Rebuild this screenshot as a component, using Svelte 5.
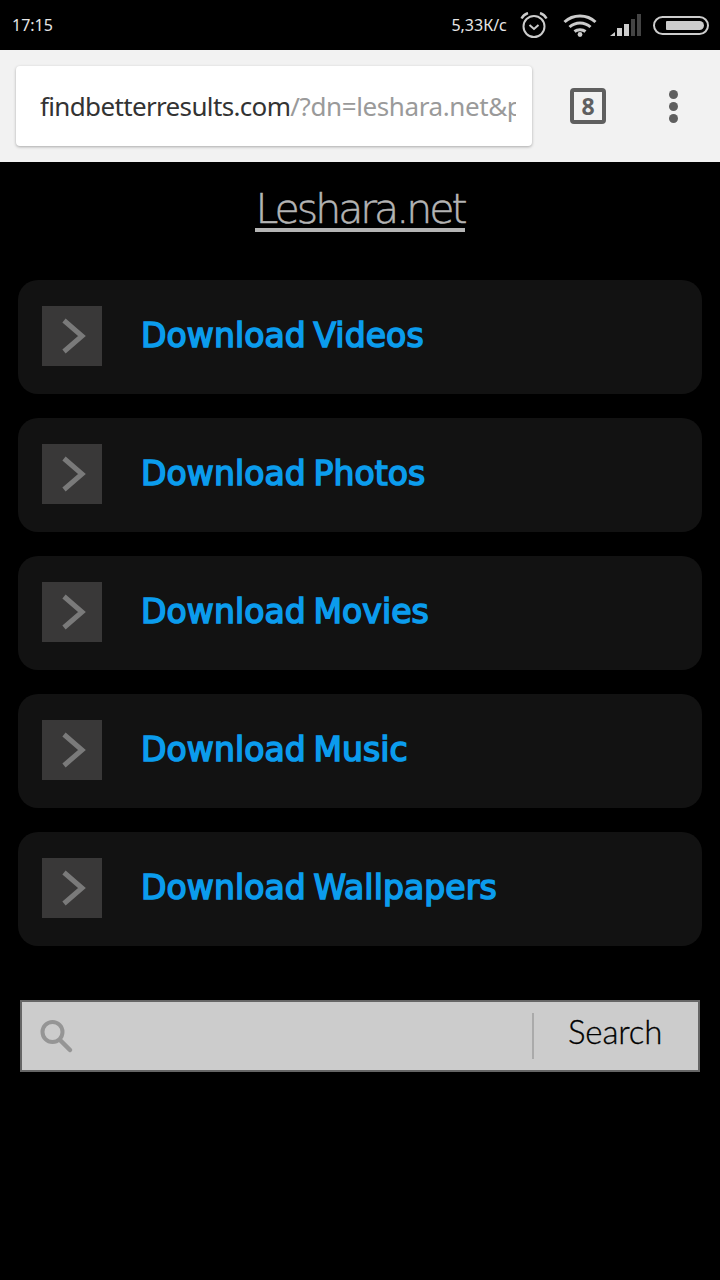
<script>
  const links = ['Download Videos', 'Download Photos', 'Download Movies', 'Download Music', 'Download Wallpapers'];
</script>

<div class="status">
  <span class="time">17:15</span>
  <div class="status-right">
    <span class="speed">5,33К/с</span>
    <svg class="alarm" width="28" height="26" viewBox="0 0 28 26" fill="none" stroke="#ccc">
      <circle cx="14" cy="14.5" r="10.5" stroke-width="2" />
      <path d="M9.5 13l4.5 4 4.5-4" stroke-width="2" />
      <path d="M1.5 6.5C3 3.5 5 2 8 1M26.5 6.5C25 3.5 23 2 20 1" stroke-width="2.4" />
    </svg>
    <svg class="wifi" width="34" height="24" viewBox="0 0 34 24" fill="none" stroke="#ccc" stroke-width="3">
      <path d="M1.5 9C10 1 24 1 32.5 9" />
      <path d="M6.5 14C12.5 8.5 21.5 8.5 27.5 14" />
      <path d="M11.5 18.5C14.5 16 19.5 16 22.5 18.5" />
      <circle cx="17" cy="21.5" r="2.4" fill="#ccc" stroke="none" />
    </svg>
    <svg class="signal" width="32" height="22" viewBox="0 0 32 22">
      <path d="M0 22l5-4v4z" fill="#ccc" />
      <rect x="7" y="14" width="5" height="8" fill="#ccc" />
      <rect x="14" y="10" width="5" height="12" fill="#ccc" />
      <rect x="21" y="5" width="4" height="17" fill="#444" />
      <rect x="27" y="0" width="4" height="22" fill="#444" />
    </svg>
    <div class="battery"><div class="level"></div></div>
  </div>
</div>

<div class="toolbar">
  <div class="url"><div class="url-text"><span class="host">findbetterresults.com</span><span class="rest">/?dn=leshara.net&amp;p</span></div></div>
  <div class="tabs">8</div>
  <div class="menu"><i></i><i></i><i></i></div>
</div>

<main>
  <h1><a href="#top">Leshara.net</a></h1>

  <div class="cards">
    {#each links as link}
      <div class="card">
        <div class="arrow">
          <svg width="60" height="60" viewBox="0 0 60 60" fill="none">
            <path d="M22 14.500l18 15.500-18 15.500" stroke="#7a7a7a" stroke-width="5" />
          </svg>
        </div>
        <span class="label">{link}</span>
      </div>
    {/each}
  </div>

  <div class="search">
    <svg class="glass" width="36" height="36" viewBox="0 0 36 36" fill="none" stroke="#959595">
      <circle cx="14.500" cy="14" r="10" stroke-width="4" />
      <path d="M22 22l10 10" stroke-width="4.500" stroke-linecap="round" />
    </svg>
    <div class="divider"></div>
    <span class="go">Search</span>
  </div>
</main>

<style>
  :global(body) {
    background: #000;
  }
  .status {
    height: 50px;
    background: #000;
    color: #e6e6e6;
    display: flex;
    align-items: center;
    justify-content: space-between;
    padding: 0 11px 0 12px;
    font-family: "Noto Sans", sans-serif;
  }
  .time {
    font-size: 16px;
  }
  .status-right {
    display: flex;
    align-items: center;
  }
  .speed {
    font-size: 16px;
    margin-right: 13px;
  }
  .wifi {
    margin-left: 15px;
  }
  .signal {
    margin-left: 13px;
  }
  .battery {
    width: 56px;
    height: 19px;
    box-sizing: border-box;
    border: 2px solid #ccc;
    border-radius: 10px;
    margin-left: 11px;
    padding: 3px;
    display: flex;
    justify-content: flex-end;
  }
  .level {
    width: 38px;
    background: #ccc;
    border-radius: 1px 5px 5px 1px;
  }
  .toolbar {
    height: 112px;
    background: #f2f2f2;
    display: flex;
    align-items: center;
    padding-left: 16px;
  }
  .url {
    width: 516px;
    height: 80px;
    box-sizing: border-box;
    background: #fff;
    border-radius: 4px;
    box-shadow: 0 1px 3px rgba(0, 0, 0, 0.3);
    padding: 0 16px 0 24px;
    display: flex;
    align-items: center;
  }
  .url-text {
    overflow: hidden;
    white-space: nowrap;
    font-family: "Noto Sans", sans-serif;
    font-size: 26px;
    color: #9a9a9a;
  }
  .host {
    color: #333;
    letter-spacing: -0.65px;
  }
  .rest {
    letter-spacing: -0.4px;
  }
  .tabs {
    width: 36px;
    height: 36px;
    box-sizing: border-box;
    border: 4px solid #5f5f5f;
    border-radius: 4px;
    margin-left: 38px;
    color: #5f5f5f;
    font-family: "Noto Sans", sans-serif;
    font-weight: 700;
    font-size: 23px;
    line-height: 1;
    display: flex;
    align-items: center;
    justify-content: center;
  }
  .menu {
    display: flex;
    flex-direction: column;
    gap: 3px;
    margin-left: 63px;
  }
  .menu i {
    width: 9px;
    height: 9px;
    border-radius: 50%;
    background: #5f5f5f;
  }
  main {
    display: flex;
    flex-direction: column;
    padding: 0 18px 208px;
  }
  h1 {
    margin: 0;
    padding-top: 24px;
    font-weight: 200;
    font-size: 41px;
    line-height: 46px;
    letter-spacing: -3px;
    font-family: "DejaVu Sans", sans-serif;
  }
  h1 a {
    display: block;
    width: fit-content;
    height: 42px;
    margin: 0 auto;
    color: #b4b4b4;
    -webkit-text-stroke: 0.5px #b4b4b4;
    text-decoration: none;
    border-bottom: 4px solid #b4b4b4;
  }
  .cards {
    display: flex;
    flex-direction: column;
    gap: 24px;
    margin-top: 48px;
  }
  .card {
    height: 114px;
    box-sizing: border-box;
    padding: 0 0 2px 24px;
    background: #121212;
    border-radius: 20px;
    display: flex;
    align-items: center;
  }
  .arrow {
    width: 60px;
    height: 60px;
    background: #393838;
  }
  .arrow svg {
    display: block;
  }
  .label {
    margin: 0 0 2px 39px;
    font-family: "DejaVu Sans", sans-serif;
    font-size: 33px;
    letter-spacing: 0.1px;
    word-spacing: -3px;
    color: #0b9ced;
    -webkit-text-stroke: 1.6px #0b9ced;
  }
  .search {
    margin: 54px 2px 0;
    height: 72px;
    box-sizing: border-box;
    background: #ccc;
    border: 2px solid #666;
    display: flex;
    align-items: center;
    padding-left: 16px;
  }
  .divider {
    width: 2px;
    height: 46px;
    background: #aaa;
    margin-left: 458px;
  }
  .go {
    margin: 0 0 10px 34px;
    font-family: "Lato", sans-serif;
    font-weight: 300;
    font-size: 33px;
    letter-spacing: -0.15px;
    color: #000;
    -webkit-text-stroke: 0.3px #000;
  }
</style>
